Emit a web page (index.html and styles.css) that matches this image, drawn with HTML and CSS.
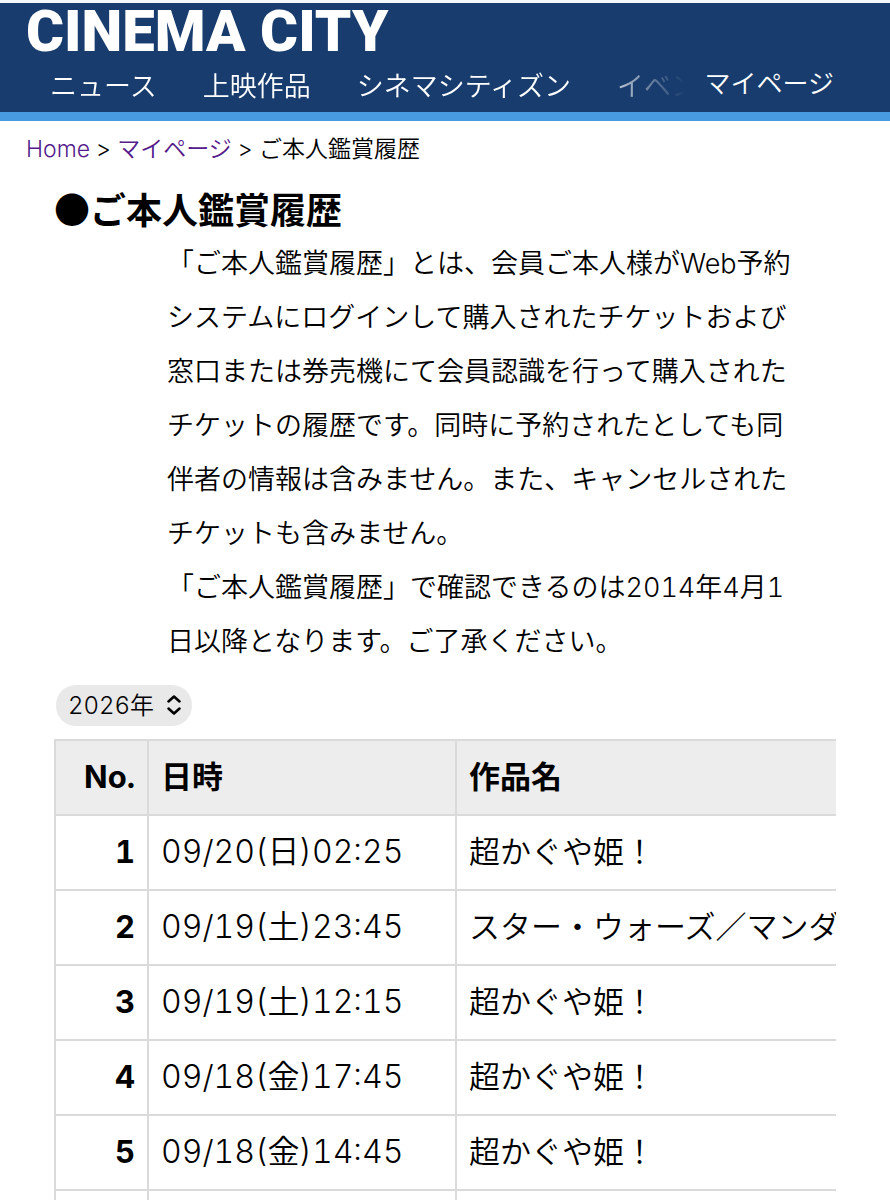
FILE: index.html
```html
<!DOCTYPE html>
<html lang="ja">
<head>
    <meta charset="UTF-8">
    <meta name="viewport" content="width=device-width, initial-scale=1.0">
    <title>ご本人鑑賞履歴 | CINEMA CITY</title>
    <link rel="stylesheet" href="styles.css">
</head>
<body>
    <header class="site-header">
        <a class="logo" href="#">CINEMA CITY</a>
        <div class="nav-row">
            <nav class="main-nav">
                <a href="#">ニュース</a>
                <a href="#">上映作品</a>
                <a href="#">シネマシティズン</a>
                <a href="#">イベント</a>
            </nav>
            <a class="mypage-link" href="#">マイページ</a>
        </div>
    </header>

    <div class="breadcrumb">
        <a href="#">Home</a> &gt; <a href="#">マイページ</a> &gt; ご本人鑑賞履歴
    </div>

    <main class="content">
        <h1>●ご本人鑑賞履歴</h1>
        <p class="description">「ご本人鑑賞履歴」とは、会員ご本人様がWeb予約システムにログインして購入されたチケットおよび窓口または券売機にて会員認識を行って購入されたチケットの履歴です。同時に予約されたとしても同伴者の情報は含みません。また、キャンセルされたチケットも含みません。<br>「ご本人鑑賞履歴」で確認できるのは2014年4月1日以降となります。ご了承ください。</p>

        <div class="year-select">
            <select id="year" aria-label="年">
                <option selected>2026年</option>
                <option>2025年</option>
                <option>2024年</option>
            </select>
            <svg class="arrows" viewBox="0 0 16 20" aria-hidden="true">
                <path d="M2.5 6.5 L8 1.5 L13.5 6.5 M2.5 13.5 L8 18.5 L13.5 13.5"/>
            </svg>
        </div>

        <div class="table-wrap">
            <table class="history">
                <thead>
                    <tr><th class="no">No.</th><th class="date">日時</th><th class="work">作品名</th></tr>
                </thead>
                <tbody>
                    <tr><th class="no">1</th><td class="date">09/20(日)02:25</td><td>超かぐや姫！</td></tr>
                    <tr><th class="no">2</th><td class="date">09/19(土)23:45</td><td>スター・ウォーズ／マンダロリアン・アンド・グローグー</td></tr>
                    <tr><th class="no">3</th><td class="date">09/19(土)12:15</td><td>超かぐや姫！</td></tr>
                    <tr><th class="no">4</th><td class="date">09/18(金)17:45</td><td>超かぐや姫！</td></tr>
                    <tr><th class="no">5</th><td class="date">09/18(金)14:45</td><td>超かぐや姫！</td></tr>
                    <tr><th class="no"></th><td class="date"></td><td></td></tr>
                </tbody>
            </table>
        </div>
    </main>
</body>
</html>
```
FILE: styles.css
```css
* {
    box-sizing: border-box;
}
body {
    margin: 0;
    font-family: Inter, "Noto Sans CJK JP", sans-serif;
    font-weight: 350;
    font-variant-numeric: tabular-nums;
    color: #000;
    background-color: #fff;
    overflow-x: hidden;
}
.site-header {
    border-top: 3px solid #f5f9fd;
    border-bottom: 9px solid #489be1;
    background-color: #183c6d;
}
.site-header a {
    color: #fff;
    text-decoration: none;
    white-space: nowrap;
}
.logo {
    display: block;
    padding-left: 26px;
    font-family: Roboto, sans-serif;
    font-size: 58px;
    font-weight: 900;
    line-height: 56px;
}
.nav-row {
    display: flex;
    justify-content: space-between;
    height: 53px;
    padding-right: 56px;
}
.main-nav {
    display: flex;
    gap: 46px;
    flex: 1;
    min-width: 0;
    margin-right: 20px;
    padding-left: 50px;
    overflow: hidden;
    font-size: 27px;
    line-height: 56px;
    -webkit-mask-image: linear-gradient(to right, #000 calc(100% - 96px), transparent);
    mask-image: linear-gradient(to right, #000 calc(100% - 96px), transparent);
}
.mypage-link {
    font-size: 26px;
    line-height: 50px;
}
.breadcrumb {
    padding: 12px 26px 0;
    font-size: 23px;
    line-height: 32px;
}
.breadcrumb a {
    color: #551a8b;
    text-decoration: none;
}
.content {
    padding: 0 54px;
}
h1 {
    margin: 16px 0 2px;
    font-family: "Noto Sans CJK JP", sans-serif;
    font-size: 36px;
    font-weight: 700;
    line-height: 54px;
}
.description {
    margin: 0 40px 0 113px;
    font-size: 27px;
    line-height: 54px;
}
.year-select {
    position: relative;
    width: 136px;
    margin: 16px 0 13px 2px;
}
.year-select select {
    display: block;
    width: 100%;
    height: 41px;
    padding: 0 12px;
    border: none;
    border-radius: 20px;
    background-color: #e9e9e9;
    color: #000;
    font: inherit;
    font-size: 24px;
    appearance: none;
}
.arrows {
    position: absolute;
    top: 10px;
    right: 10px;
    width: 16px;
    height: 20px;
    fill: none;
    stroke: #000;
    stroke-width: 2.5;
    stroke-linecap: round;
    stroke-linejoin: round;
    pointer-events: none;
}
.table-wrap {
    overflow: hidden;
}
.history {
    width: 1200px;
    border-collapse: collapse;
    table-layout: fixed;
    font-size: 31px;
    line-height: 44px;
}
.history th,
.history td {
    height: 75px;
    padding: 0 12px 2px;
    border: 2px solid #dadada;
    text-align: left;
    white-space: nowrap;
}
.history thead th {
    background-color: #ededed;
}
.history .no {
    width: 93px;
    text-align: right;
}
.history .date {
    width: 308px;
}
.history td.date {
    font-size: 32px;
}
```
